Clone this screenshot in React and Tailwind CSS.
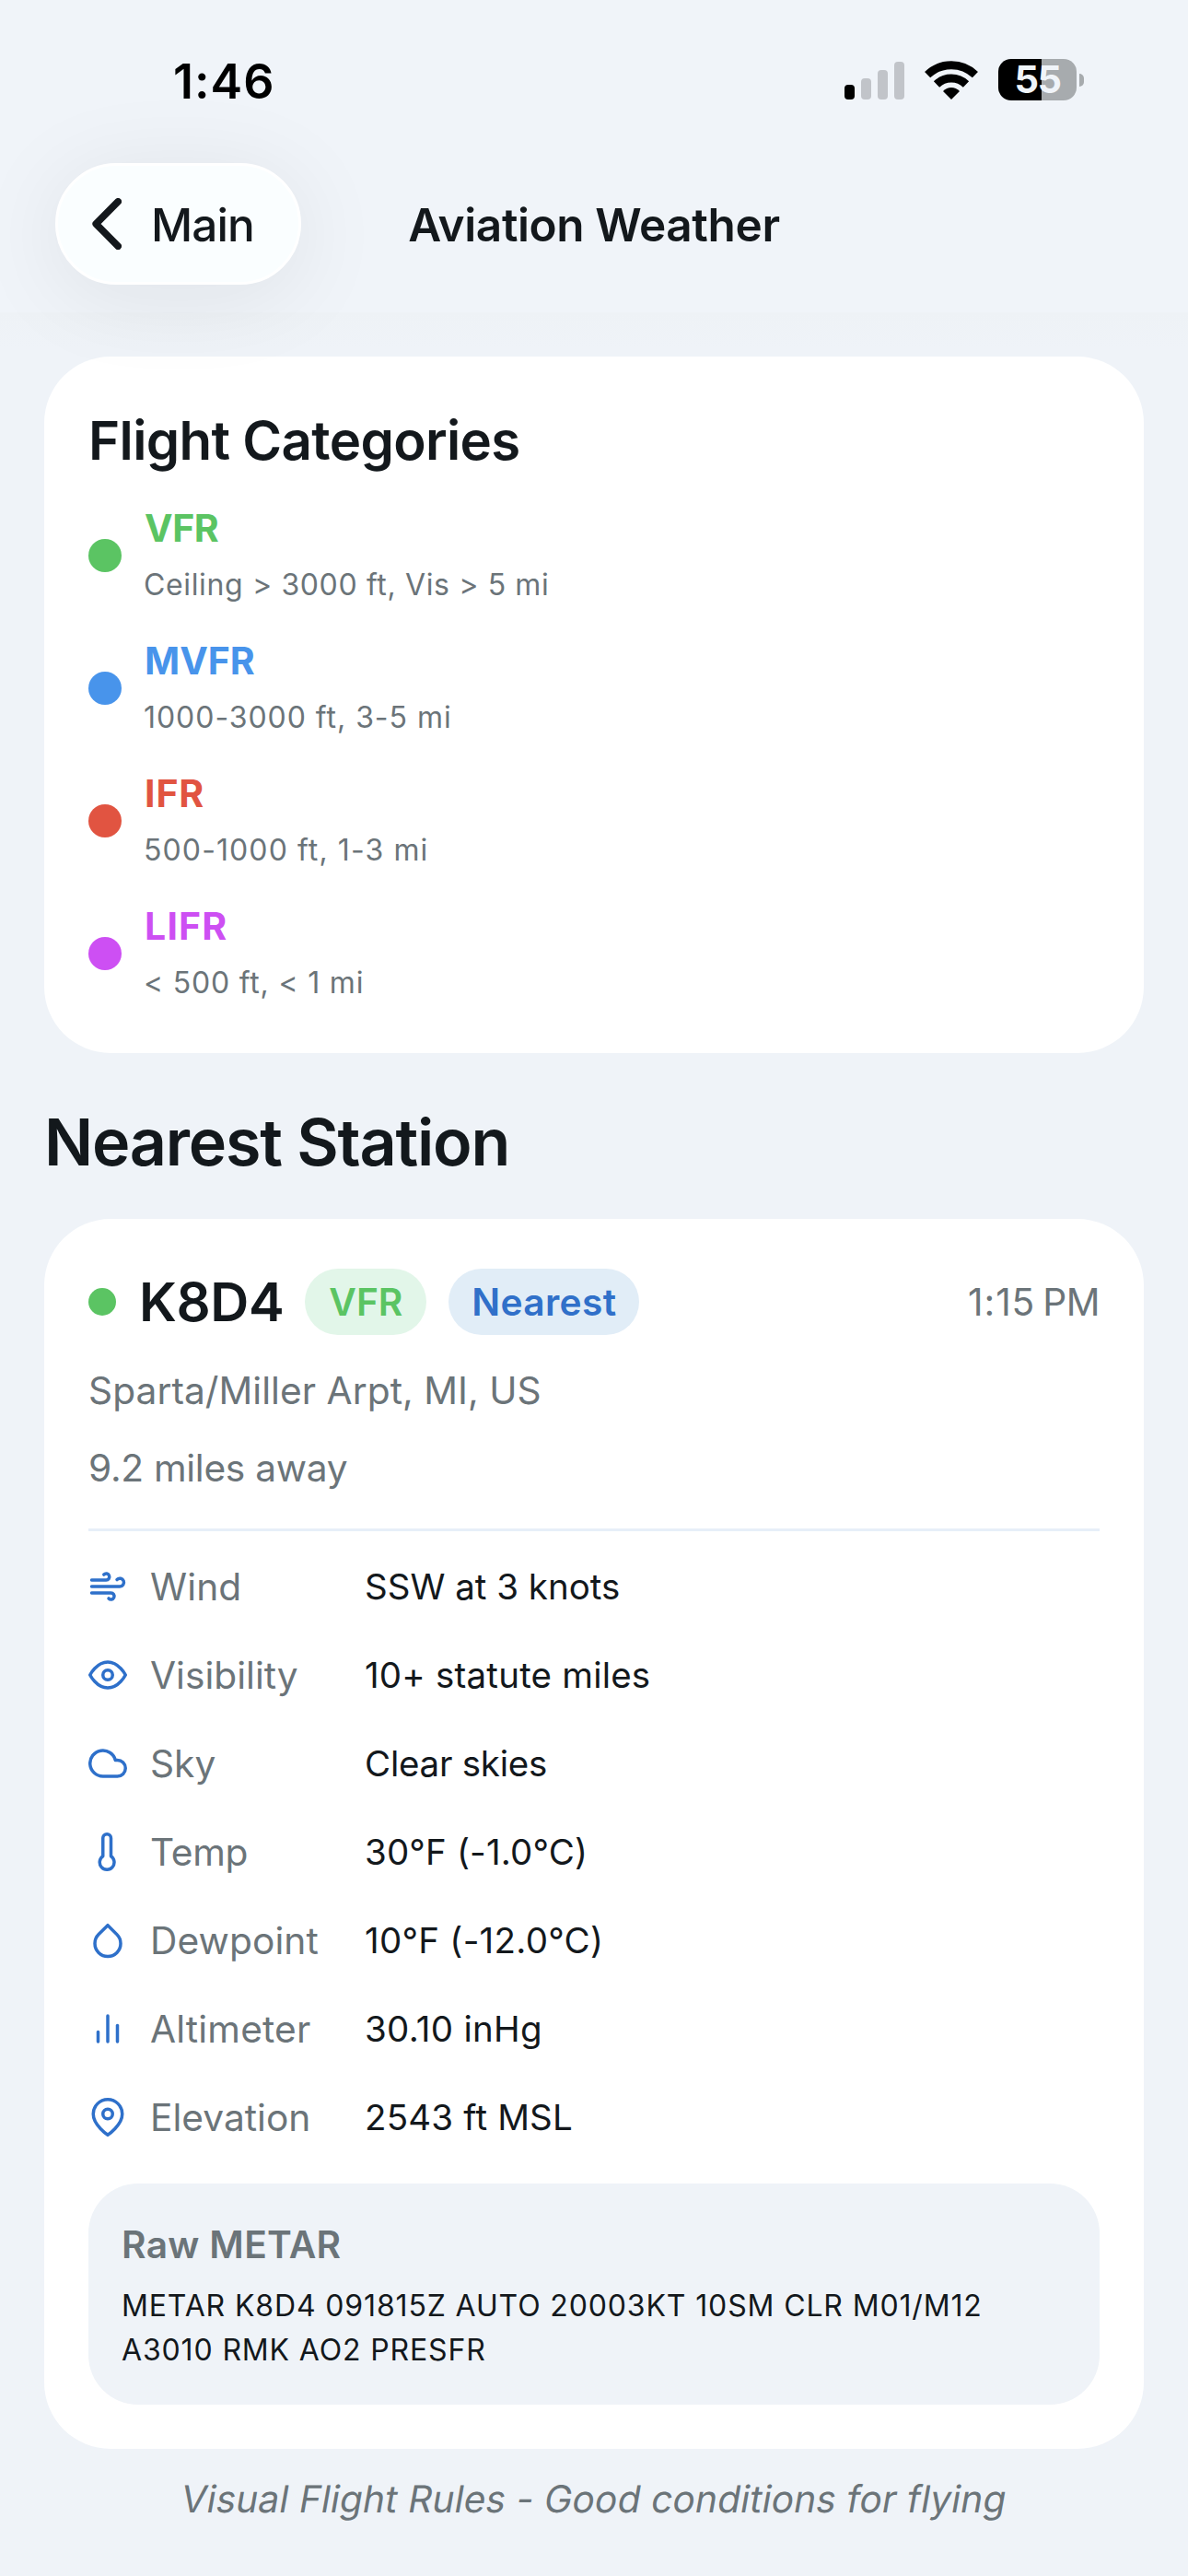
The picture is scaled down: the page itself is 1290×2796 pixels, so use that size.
import React from "react";
import {
  FiWind,
  FiEye,
  FiCloud,
  FiThermometer,
  FiDroplet,
  FiBarChart2,
  FiMapPin,
} from "react-icons/fi";

const categories = [
  {
    name: "VFR",
    detail: "Ceiling > 3000 ft, Vis > 5 mi",
    dot: "bg-[#5bc463]",
    nameClass: "text-[#5bc463] tracking-[-0.4px] pl-px",
    detailClass: "tracking-[0.64px]",
  },
  {
    name: "MVFR",
    detail: "1000-3000 ft, 3-5 mi",
    dot: "bg-[#4894eb]",
    nameClass: "text-[#4894eb] tracking-[0px] pl-px",
    detailClass: "tracking-[0.96px]",
  },
  {
    name: "IFR",
    detail: "500-1000 ft, 1-3 mi",
    dot: "bg-[#e15441]",
    nameClass: "text-[#e15441] tracking-[0.9px] pl-px",
    detailClass: "tracking-[1.1px]",
  },
  {
    name: "LIFR",
    detail: "< 500 ft, < 1 mi",
    dot: "bg-[#cd4ff3]",
    nameClass: "text-[#cd4ff3] tracking-[1.2px] pl-px",
    detailClass: "tracking-[0.8px]",
  },
];

const readings = [
  { icon: FiWind, label: "Wind", value: "SSW at 3 knots", labelClass: "tracking-[0.1px]", valueClass: "" },
  { icon: FiEye, label: "Visibility", value: "10+ statute miles", labelClass: "tracking-[0px]", valueClass: "tracking-[0.2px]" },
  { icon: FiCloud, label: "Sky", value: "Clear skies", labelClass: "", valueClass: "tracking-[-0.24px]" },
  { icon: FiThermometer, label: "Temp", value: "30°F (-1.0°C)", labelClass: "tracking-[-0.3px]", valueClass: "tracking-[0.15px]" },
  { icon: FiDroplet, label: "Dewpoint", value: "10°F (-12.0°C)", labelClass: "tracking-[0.09px]", valueClass: "tracking-[0.26px]" },
  { icon: FiBarChart2, label: "Altimeter", value: "30.10 inHg", labelClass: "tracking-[0.16px]", valueClass: "tracking-[0.3px]" },
  { icon: FiMapPin, label: "Elevation", value: "2543 ft MSL", labelClass: "", valueClass: "tracking-[0.18px]" },
];

function SignalBars() {
  return (
    <div className="flex h-[41px] items-end gap-[7px]">
      <span className="h-4 w-[11px] rounded-[4px] bg-black" />
      <span className="h-[23px] w-[11px] rounded-[4px] bg-[#c1c4c9]" />
      <span className="h-8 w-[11px] rounded-[4px] bg-[#c1c4c9]" />
      <span className="h-[41px] w-[11px] rounded-[4px] bg-[#c1c4c9]" />
    </div>
  );
}

function WifiIcon() {
  return (
    <svg width="58" height="42" viewBox="0 0 58 42" fill="none">
      <path d="M3.1 15.2A37.3 37.3 0 0 1 54.9 15.2" stroke="black" strokeWidth="8.8" />
      <path d="M13 25.5A23 23 0 0 1 45 25.5" stroke="black" strokeWidth="9" />
      <path d="M29 42L20 33Q24 29 29 29T38 33Z" fill="black" />
    </svg>
  );
}

function Battery() {
  return (
    <div className="flex items-center gap-[3px]">
      <div className="flex h-[45px] w-[85px] items-center justify-center rounded-[14px] bg-[linear-gradient(to_right,#000_47px,#a7abae_47px)] text-[41.5px] leading-none font-bold tracking-[-1.5px] text-[#f0f4f9]">
        <span className="pt-px">55</span>
      </div>
      <span className="h-[14px] w-[5px] rounded-r-full bg-[#a7abae]" />
    </div>
  );
}

function Header() {
  return (
    <header className="relative z-10 h-[339px] bg-[#f0f4f9]">
      <div className="flex h-[177px] justify-between pr-[113px] pl-[188px]">
        <time className="mt-[59px] text-[52px] leading-[60px] font-semibold tracking-[1px] text-black">
          1:46
        </time>
        <div className="mt-[64px] flex h-[45px] items-center">
          <div className="mt-px"><SignalBars /></div>
          <div className="mr-[22px] ml-[22px]"><WifiIcon /></div>
          <Battery />
        </div>
      </div>
      <div className="grid h-[132px] grid-cols-[1fr_auto_1fr] items-center px-[60px]">
        <button className="flex h-[132px] w-[267px] items-center rounded-full border-[3px] border-white bg-[#fafeff] pl-[37px] shadow-[0_12px_100px_rgba(20,20,20,0.08)]">
          <svg width="32" height="56" viewBox="0 0 32 56" fill="none">
            <path d="M28.2 3.8L4.2 28L28.2 52.2" stroke="#13181c" strokeWidth="7.6" strokeLinecap="round" strokeLinejoin="round" />
          </svg>
          <span className="ml-8 pt-[3px] text-[49.5px] leading-none font-medium tracking-[-0.9px]">Main</span>
        </button>
        <h1 className="pt-[3px] text-[49.5px] leading-none font-semibold tracking-[-0.38px]">Aviation Weather</h1>
      </div>
    </header>
  );
}

function FlightCategories() {
  return (
    <section className="rounded-[72px] bg-white p-12">
      <h2 className="mb-[22px] text-[58.2px] leading-[86px] font-semibold tracking-[-0.65px]">
        Flight Categories
      </h2>
      <ul className="flex flex-col gap-6">
        {categories.map((c) => (
          <li key={c.name} className="flex items-center gap-6">
            <span className={`size-9 shrink-0 rounded-full ${c.dot}`} />
            <div>
              <p className={`text-[41px] leading-[60px] font-bold ${c.nameClass}`}>{c.name}</p>
              <p className={`-mb-[2px] pt-[2px] text-[32px] leading-[60px] text-[#6b7479] ${c.detailClass}`}>{c.detail}</p>
            </div>
          </li>
        ))}
      </ul>
    </section>
  );
}

function StationCard() {
  return (
    <section className="rounded-[72px] bg-white p-12">
      <div className="flex h-[84px] items-center gap-6">
        <span className="size-[30px] rounded-full bg-[#5bc463]" />
        <h3 className="pl-px text-[58.2px] leading-[84px] font-semibold tracking-[-0.4px]">K8D4</h3>
        <span className="-ml-px flex h-[72px] w-[132px] items-center justify-center rounded-full bg-[#e2f6e9] pt-px text-[40.7px] font-semibold text-[#5bc463]">
          VFR
        </span>
        <span className="flex h-[72px] w-[207px] items-center justify-center rounded-full bg-[#e1edf7] pt-px text-[40.7px] font-semibold tracking-[0.35px] text-[#3070c9]">
          Nearest
        </span>
        <time className="ml-auto flex gap-[8px] pt-[2px] text-[40.7px] text-[#6b7479]">
          <span className="tracking-[0.9px]">1:15</span>
          <span className="tracking-[-0.5px]">PM</span>
        </time>
      </div>
      <p className="mt-[25px] text-[40.7px] leading-[60px] tracking-[0.04px] text-[#6b7479]">Sparta/Miller Arpt, MI, US</p>
      <p className="mt-6 text-[40.7px] leading-[60px] tracking-[-0.3px] text-[#6b7479]">9.2 miles away</p>
      <hr className="mt-[35px] h-[3px] border-0 bg-[#e7eff8]" />
      <dl className="mt-[30px] flex flex-col gap-9">
        {readings.map((r) => (
          <div key={r.label} className="flex h-[60px] items-center">
            <r.icon className="size-[42px] text-[#2e70ca]" />
            <dt className={`ml-[25px] w-[233px] pt-px text-[40.7px] leading-[60px] text-[#6b7479] ${r.labelClass}`}>{r.label}</dt>
            <dd className={`text-[38.5px] leading-[60px] ${r.valueClass}`}>{r.value}</dd>
          </div>
        ))}
      </dl>
      <div className="mt-[42px] h-[240px] rounded-[54px] bg-[#eff3f8] px-9 pt-[37px]">
        <h4 className="text-[40.7px] leading-[60px] font-semibold tracking-[0.3px] text-[#6b7479]">Raw METAR</h4>
        <p className="mt-3 text-[32px] leading-[48px] tracking-[0.86px]">
          METAR K8D4 091815Z AUTO 20003KT 10SM CLR M01/M12 A3010 RMK AO2 PRESFR
        </p>
      </div>
    </section>
  );
}

export default function App() {
  return (
    <div className="h-[2796px] w-[1290px] overflow-hidden bg-[#eff3f8] font-['Inter',sans-serif] text-[#13181c]">
      <Header />
      <main className="bg-[linear-gradient(to_bottom,#eef2f6_0px,#eff3f8_40px)] px-12 pt-12">
        <FlightCategories />
        <h2 className="mt-[49px] mb-[35px] text-[70px] leading-[96px] font-semibold tracking-[-1.2px]">Nearest Station</h2>
        <StationCard />
        <p className="mt-[25px] -skew-x-[10deg] text-center text-[40.7px] leading-[60px] tracking-[0.12px] text-[#6b7479]">
          Visual Flight Rules - Good conditions for flying
        </p>
      </main>
    </div>
  );
}
